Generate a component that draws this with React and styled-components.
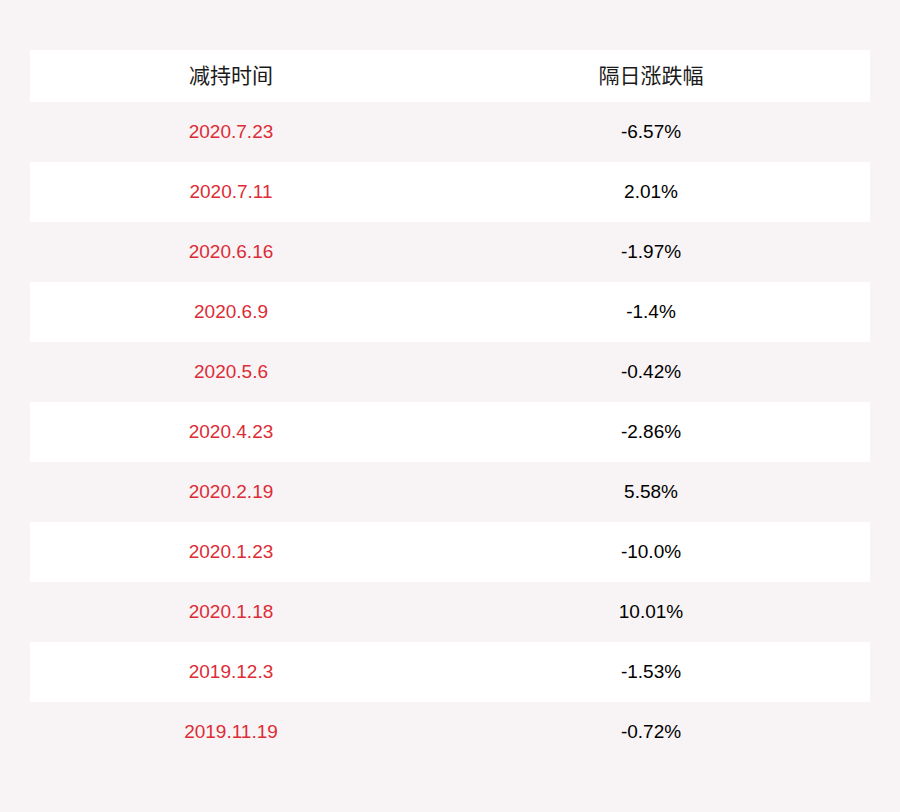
import React from 'react';
import styled, { createGlobalStyle } from 'styled-components';

const GlobalStyle = createGlobalStyle`
  html, body {
    margin: 0;
    padding: 0;
    background: #f8f4f5;
  }
  body {
    font-family: "Liberation Sans", Arial, "Noto Sans CJK SC", sans-serif;
  }
`;

const Page = styled.div`
  width: 900px;
  height: 812px;
  box-sizing: border-box;
  padding: 50px 30px 0;
  background: #f8f4f5;
`;

const Table = styled.div`
  display: flex;
  flex-direction: column;
`;

const Row = styled.div`
  display: grid;
  grid-template-columns: 402px 1fr;
  align-items: center;
  height: ${({ head }) => (head ? '52px' : '60px')};
  background: ${({ white }) => (white ? '#ffffff' : 'transparent')};
`;

const HeadCell = styled.div`
  text-align: center;
  font-family: "Noto Sans CJK SC", "Liberation Sans", sans-serif;
  font-size: 21px;
  line-height: 1;
  margin-top: -3px;
  color: #1a1a1a;
`;

const Cell = styled.div`
  text-align: center;
  font-size: 19px;
  color: ${({ red }) => (red ? '#dd2c36' : '#000000')};
`;

const data = [
  ['2020.7.23', '-6.57%'],
  ['2020.7.11', '2.01%'],
  ['2020.6.16', '-1.97%'],
  ['2020.6.9', '-1.4%'],
  ['2020.5.6', '-0.42%'],
  ['2020.4.23', '-2.86%'],
  ['2020.2.19', '5.58%'],
  ['2020.1.23', '-10.0%'],
  ['2020.1.18', '10.01%'],
  ['2019.12.3', '-1.53%'],
  ['2019.11.19', '-0.72%'],
];

export default function App() {
  return (
    <>
      <GlobalStyle />
      <Page>
        <Table>
          <Row head white>
            <HeadCell>减持时间</HeadCell>
            <HeadCell>隔日涨跌幅</HeadCell>
          </Row>
          {data.map(([date, pct], i) => (
            <Row key={date} white={i % 2 === 1}>
              <Cell red>{date}</Cell>
              <Cell>{pct}</Cell>
            </Row>
          ))}
        </Table>
      </Page>
    </>
  );
}
